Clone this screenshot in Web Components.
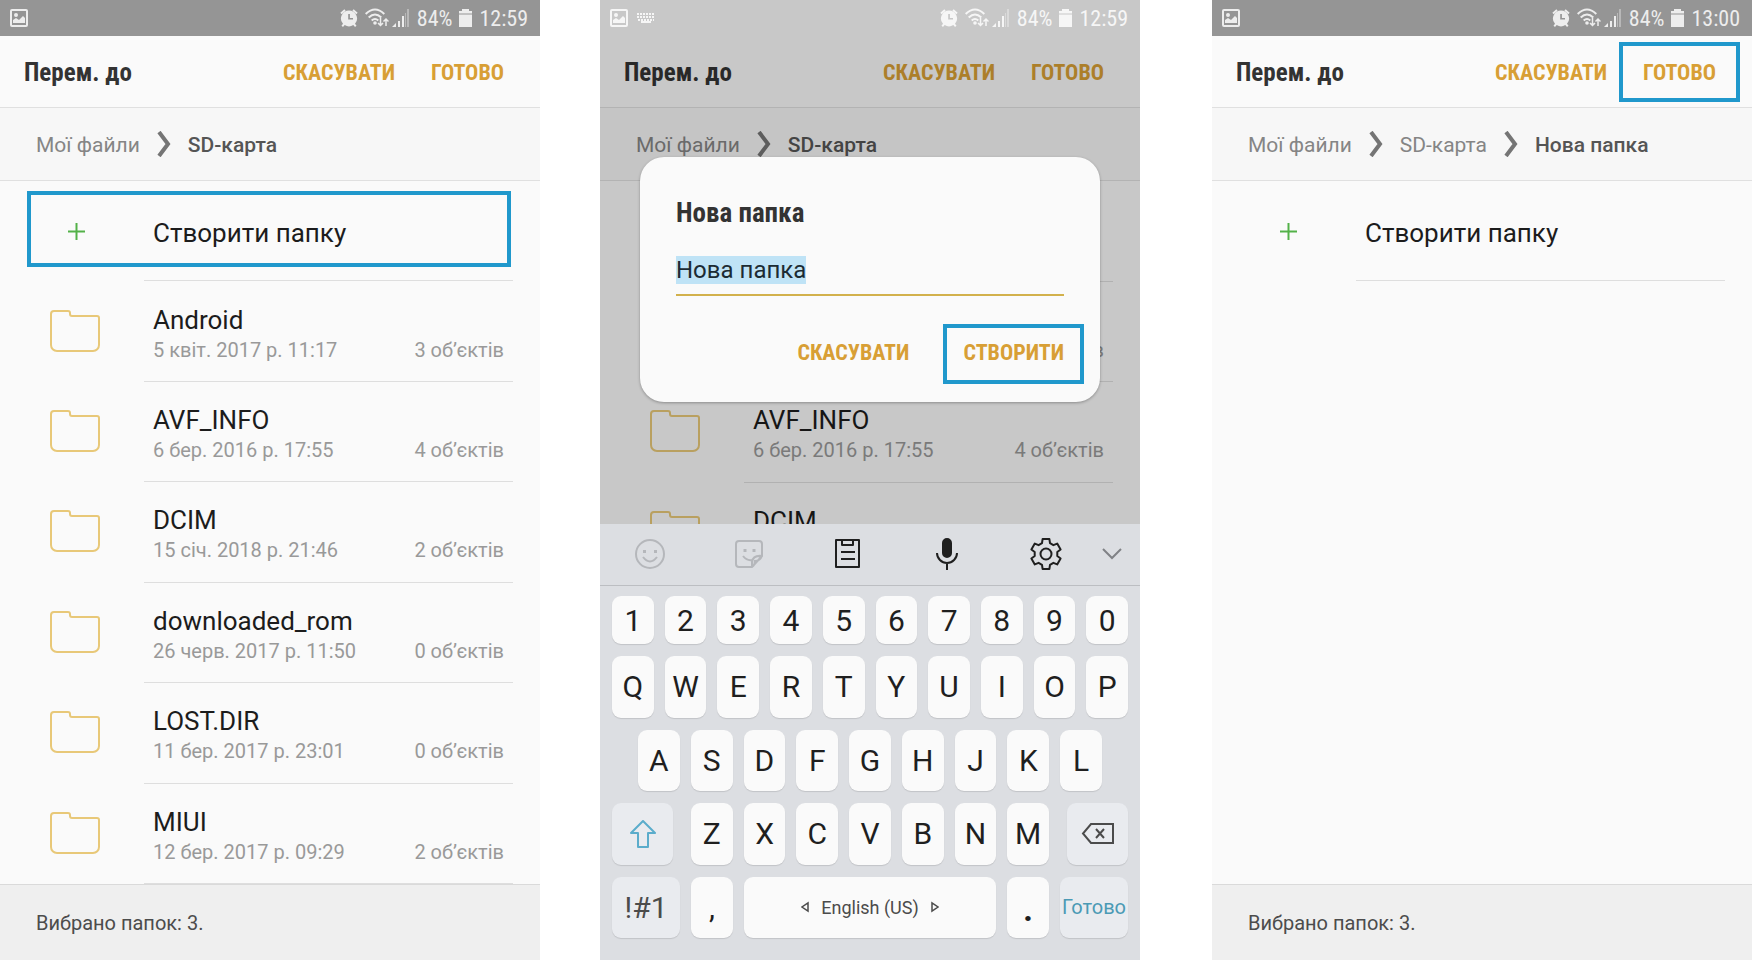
<!DOCTYPE html>
<html lang="uk">
<head>
<meta charset="utf-8">
<title>Нова папка</title>
<style>
    body {
        margin: 0;
        background: #fff;
        font-family: Roboto, "Liberation Sans", sans-serif;
        --condensed: "Roboto Condensed", "Liberation Sans Narrow", Roboto, sans-serif;
        --accent: #d89f35;
        --mark: #2098cc;
    }

    main {
        display: flex;
        min-height: 100vh;
    }

    phone-screen {
        flex: 1;
    }

    phone-screen + phone-screen {
        margin-left: 60px;
    }

    phone-screen:last-child {
        margin-left: 72px;
    }
</style>
</head>
<body>
<main>
    <phone-screen>
        <status-bar slot="status" time="12:59"></status-bar>
        <move-header></move-header>
        <crumb-trail path="Мої файли/SD-карта"></crumb-trail>
        <file-list>
            <create-row marked></create-row>
            <folder-row name="Android" date="5 квіт. 2017 р. 11:17" count="3"></folder-row>
            <folder-row name="AVF_INFO" date="6 бер. 2016 р. 17:55" count="4"></folder-row>
            <folder-row name="DCIM" date="15 січ. 2018 р. 21:46" count="2"></folder-row>
            <folder-row name="downloaded_rom" date="26 черв. 2017 р. 11:50" count="0"></folder-row>
            <folder-row name="LOST.DIR" date="11 бер. 2017 р. 23:01" count="0"></folder-row>
            <folder-row name="MIUI" date="12 бер. 2017 р. 09:29" count="2"></folder-row>
        </file-list>
        <selection-footer>Вибрано папок: 3.</selection-footer>
    </phone-screen>

    <phone-screen dimmed>
        <status-bar slot="status" time="12:59" keyboard></status-bar>
        <move-header></move-header>
        <crumb-trail path="Мої файли/SD-карта"></crumb-trail>
        <file-list>
            <create-row></create-row>
            <folder-row name="Android" date="5 квіт. 2017 р. 11:17" count="3"></folder-row>
            <folder-row name="AVF_INFO" date="6 бер. 2016 р. 17:55" count="4"></folder-row>
            <folder-row name="DCIM" date="15 січ. 2018 р. 21:46" count="2"></folder-row>
        </file-list>
        <name-dialog slot="dialog"></name-dialog>
        <soft-keyboard slot="keyboard"></soft-keyboard>
    </phone-screen>

    <phone-screen>
        <status-bar slot="status" time="13:00"></status-bar>
        <move-header marked></move-header>
        <crumb-trail path="Мої файли/SD-карта/Нова папка"></crumb-trail>
        <file-list>
            <create-row></create-row>
        </file-list>
        <selection-footer>Вибрано папок: 3.</selection-footer>
    </phone-screen>
</main>

<script>
const buttonReset = `
    button {
        margin: 0;
        padding: 0;
        border: 0;
        background: none;
        color: inherit;
        font: inherit;
        cursor: pointer;
    }
    svg { display: block; }
`;

const define = (name, markup, setup) => {
    const template = document.createElement("template");
    template.innerHTML = markup;

    customElements.define(name, class extends HTMLElement {
        connectedCallback() {
            if (this.shadowRoot) {
                return;
            }
            this.attachShadow({mode: "open"});
            this.shadowRoot.appendChild(template.content.cloneNode(true));
            if (setup) {
                setup(this, this.shadowRoot);
            }
        }
    });
};

define("phone-screen", `
    <style>
        :host {
            display: flex;
            flex-direction: column;
            position: relative;
            min-width: 0;
            overflow: hidden;
            background: #fafafa;
        }
        .status {
            position: relative;
            z-index: 2;
            background: #959595;
        }
        :host([dimmed]) .status { background: none; }
        .content {
            display: flex;
            flex-direction: column;
            flex: 1;
        }
        .shade { display: none; }
        :host([dimmed]) .shade {
            display: block;
            position: absolute;
            inset: 0;
            background: rgba(0, 0, 0, 0.2);
        }
        slot[name="dialog"]::slotted(*) {
            position: absolute;
            top: 157px;
            left: 40px;
            right: 40px;
        }
        slot[name="keyboard"]::slotted(*) {
            position: absolute;
            left: 0;
            right: 0;
            bottom: 0;
        }
        :host([dimmed]) .content { padding-bottom: 75px; }
    </style>
    <div class="status"><slot name="status"></slot></div>
    <div class="content"><slot></slot></div>
    <div class="shade"></div>
    <slot name="dialog"></slot>
    <slot name="keyboard"></slot>
`);

define("status-bar", `
    <style>
        :host {
            display: flex;
            align-items: center;
            justify-content: space-between;
            height: 36px;
            padding: 0 12px 0 10px;
            color: #ededed;
            font: 22px/32px var(--condensed);
        }
        :host([keyboard]) { color: #f6f6f6; }
        div { display: flex; align-items: center; }
        .left { gap: 9px; }
        .right { gap: 7px; }
        .keys { display: none; }
        :host([keyboard]) .keys { display: block; }
        svg { display: block; fill: currentColor; }
        span { padding-top: 2px; }
        .signal { margin-left: -4px; }
        .line { fill: none; stroke: currentColor; stroke-width: 2; }
    </style>
    <div class="left">
        <svg width="18" height="18" viewBox="0 0 18 18">
            <rect class="line" x="1" y="1" width="16" height="16" rx="1"/>
            <circle cx="6" cy="6" r="2"/>
            <path d="M3 14v-3l3-2 3 2 4-4 2 2v5z"/>
        </svg>
        <svg class="keys" width="18" height="10" viewBox="0 0 18 10">
            <path d="M0 1h18M0 4h18M1 7h16" fill="none" stroke="currentColor" stroke-width="2" stroke-dasharray="2 1"/>
            <path d="M4 8h10v2H4z"/>
        </svg>
    </div>
    <div class="right">
        <svg width="18" height="20" viewBox="0 0 18 20">
            <path fill-rule="evenodd" d="M9 2.500a8 8 0 0 1 6 13.300l1.500 2-1.500 1.200-1.700-1.900a8 8 0 0 1-8.600 0L3 19l-1.500-1.200 1.500-2A8 8 0 0 1 9 2.500zM8.200 6v5.600h4.800V10H9.900V6z"/>
            <path class="line" d="M1 5.500L5 2M13 2l4 3.500"/>
        </svg>
        <svg width="24" height="20" viewBox="0 0 24 20">
            <path class="line" d="M.700 6q9.300-9 18.600 0M3.700 9.500q6.300-6 12.600 0M6.700 12.500q3.300-3 6.600 0"/>
            <circle cx="10" cy="15" r="1.800"/>
            <path class="line" style="stroke-width: 1.500" d="M15.500 10v7M13 15l2.500 2.500 2.500-2.500M21 18v-7M18.500 13.500L21 11l2.500 2.500"/>
        </svg>
        <svg class="signal" width="18" height="20" viewBox="0 0 18 20">
            <path d="M0 19l4-4v4zM6 13h2v6H6zM10 8h2v11h-2z"/>
            <path opacity=".4" d="M15 1h2v18h-2z"/>
            <path d="M13 5h1v14h-1z" opacity=".4"/>
        </svg>
        <span>84%</span>
        <svg width="13" height="18" viewBox="0 0 13 18">
            <path d="M3 0h7v2H3zM0 2h13v2H0zM0 6h13v12H0z"/>
            <path opacity=".5" d="M0 4h13v2H0z"/>
        </svg>
        <span class="time"></span>
    </div>
`, (host, root) => {
    root.querySelector(".time").textContent = host.getAttribute("time");
});

define("move-header", `
    <style>
        ${buttonReset}
        :host {
            display: flex;
            align-items: center;
            justify-content: space-between;
            height: 71px;
            padding: 0 18px 0 24px;
            border-bottom: 1px solid #e0e0e0;
            font-family: var(--condensed);
            font-weight: 700;
        }
        h1 {
            margin: 0;
            padding-top: 3px;
            color: #333;
            font-size: 25px;
            line-height: 32px;
        }
        div { display: flex; }
        button {
            height: 48px;
            padding: 2px 18px 0;
            color: var(--accent);
            font-size: 22px;
        }
        :host([marked]) .done {
            outline: 4px solid var(--mark);
            outline-offset: 2px;
        }
    </style>
    <h1>Перем. до</h1>
    <div>
        <button type="button">СКАСУВАТИ</button>
        <button type="button" class="done">ГОТОВО</button>
    </div>
`);

define("crumb-trail", `
    <style>
        :host {
            display: block;
            border-bottom: 1px solid #e0e0e0;
            background: #f7f7f7;
        }
        nav {
            display: flex;
            align-items: center;
            gap: 17px;
            height: 72px;
            padding: 0 36px;
            color: #858585;
            font-size: 21px;
        }
        a {
            padding-top: 2px;
            color: inherit;
            text-decoration: none;
        }
        a[aria-current] { color: #555; font-weight: 500; }
        svg { fill: none; stroke: #757575; stroke-width: 4; }
    </style>
    <nav aria-label="Шлях"></nav>
`, (host, root) => {
    const chevron = `<svg width="14" height="26" viewBox="0 0 14 26"><path d="M2 1l9 12-9 12"/></svg>`;
    const parts = host.getAttribute("path").split("/");
    root.querySelector("nav").innerHTML = parts.map((part, i) =>
        `<a href="#"${i === parts.length - 1 ? ' aria-current="page"' : ""}>${part}</a>`
    ).join(chevron);
});

define("file-list", `
    <style>
        :host {
            display: grid;
            grid-template-rows: repeat(7, 1fr);
            flex: 1;
        }
    </style>
    <slot></slot>
`);

const rowStyles = `
    ${buttonReset}
    :host {
        display: flex;
        position: relative;
        min-height: 90px;
    }
    button {
        display: grid;
        grid-template-columns: 144px 1fr;
        flex: 1;
        padding-right: 27px;
        text-align: left;
    }
    .icon {
        align-self: center;
        padding: 0 0 2px 49px;
    }
    .text {
        display: flex;
        flex-direction: column;
        justify-content: center;
        height: 100%;
        box-sizing: border-box;
        padding: 5px 9px 0;
        border-bottom: 1px solid #dedede;
    }
    .name {
        color: #1c1c1c;
        font-size: 26px;
        line-height: 32px;
    }
`;

define("create-row", `
    <style>
        ${rowStyles}
        .icon { padding: 0 0 0 68px; }
        :host([marked])::after {
            content: "";
            position: absolute;
            inset: 10px 29px 14px 27px;
            border: 4px solid var(--mark);
            pointer-events: none;
        }
    </style>
    <button type="button">
        <span class="icon">
            <svg width="17" height="17" viewBox="0 0 17 17"><path d="M8.500 0v17M0 8.500h17" stroke="#53b148" stroke-width="2"/></svg>
        </span>
        <span class="text"><span class="name">Створити папку</span></span>
    </button>
`);

define("folder-row", `
    <style>
        ${rowStyles}
        .meta {
            display: flex;
            justify-content: space-between;
            color: #999;
            font-size: 20px;
            line-height: 28px;
        }
    </style>
    <button type="button">
        <span class="icon">
            <svg width="52" height="44" viewBox="0 0 52 44" fill="none" stroke="#e8c878" stroke-width="2">
                <path d="M2 5a3 3 0 0 1 3-3h14q2 0 2 2v1q0 2 2 2h25q2 0 2 2v27a6 6 0 0 1-6 6H8a6 6 0 0 1-6-6z"/>
            </svg>
        </span>
        <span class="text">
            <span class="name"></span>
            <span class="meta"><span class="date"></span><span class="count"></span></span>
        </span>
    </button>
`, (host, root) => {
    root.querySelector(".name").textContent = host.getAttribute("name");
    root.querySelector(".date").textContent = host.getAttribute("date");
    root.querySelector(".count").textContent = `${host.getAttribute("count")} об’єктів`;
});

define("selection-footer", `
    <style>
        :host {
            display: block;
            padding: 1px 36px 0;
            border-top: 1px solid #dadada;
            background: #efefef;
            color: #4c4c4c;
            font-size: 20px;
            line-height: 74px;
        }
    </style>
    <slot></slot>
`);

define("name-dialog", `
    <style>
        ${buttonReset}
        :host {
            display: block;
            padding: 40px 36px 24px;
            border-radius: 24px;
            background: #fafafa;
            box-shadow: 0 1px 3px rgba(0, 0, 0, 0.3);
        }
        label {
            display: block;
            color: #333;
            font: 700 27px/32px var(--condensed);
        }
        input {
            display: block;
            box-sizing: border-box;
            width: 100%;
            height: 45px;
            margin-top: 22px;
            padding: 0 0 5px;
            border: 0;
            border-bottom: 2px solid #d2b14c;
            border-radius: 0;
            outline: 0;
            background: none;
            color: #1c2b33;
            font: 24px/32px Roboto, sans-serif;
            caret-color: transparent;
        }
        input::selection {
            background: #bfe3f6;
            color: #1c2b33;
        }
        div {
            display: flex;
            justify-content: flex-end;
            gap: 26px;
            margin: 34px -14px 0 0;
        }
        button {
            height: 48px;
            padding: 0 14px 4px;
            color: var(--accent);
            font: 700 22px var(--condensed);
        }
        .create {
            outline: 4px solid var(--mark);
            outline-offset: 2px;
        }
    </style>
    <label for="name">Нова папка</label>
    <input id="name" type="text" value="Нова папка" autocomplete="off" spellcheck="false">
    <div>
        <button type="button">СКАСУВАТИ</button>
        <button type="button" class="create">СТВОРИТИ</button>
    </div>
`, (host, root) => {
    const input = root.querySelector("input");
    input.focus();
    input.select();
});

define("soft-keyboard", `
    <style>
        ${buttonReset}
        :host {
            display: block;
            background: #dcdee2;
            color: #1f1f1f;
        }
        .tools {
            display: grid;
            grid-template-columns: repeat(5, 3fr) 1fr;
            height: 61px;
            padding-right: 12px;
            border-bottom: 1px solid #bcbec2;
        }
        .tools button {
            display: grid;
            place-items: center;
            padding-bottom: 2px;
        }
        .tools svg, .special svg {
            fill: none;
            stroke: currentColor;
            stroke-width: 2;
        }
        .tools .off { color: #b5b7bb; }
        .tools .fold { color: #808286; }
        .keys {
            display: grid;
            grid-template-rows: 48px repeat(4, 1fr);
            gap: 12px;
            box-sizing: border-box;
            height: 374px;
            padding: 10px 12px 22px;
        }
        .row { display: flex; gap: 11px; }
        .row.home { padding: 0 26px; }
        .row.wide { gap: 18px; }
        .letters { display: flex; flex: 1; gap: 11px; }
        .row button {
            display: grid;
            place-items: center;
            flex: 1 1 0;
            min-width: 0;
            border-radius: 9px;
            background: #fafafa;
            box-shadow: 0 1px 1px rgba(0, 0, 0, 0.12);
            font-size: 30px;
        }
        .row .special { background: #e9ebef; }
        .row .side { flex: 0 0 61px; }
        .row .end { flex: 0 0 68px; }
        .row .dot { flex: 0 0 42px; }
        .row .period { padding-top: 6px; font-weight: 900; }
        .row .shift { color: #5baccb; }
        .row .erase { color: #4b4b4b; }
        .row .symbols { color: #4b4b4b; }
        .row .done { color: #4b9ab5; font-size: 20px; }
        .row .space {
            display: flex;
            align-items: center;
            justify-content: center;
            gap: 12px;
            color: #4b4b4b;
            font-size: 18px;
        }
        .space svg { fill: none; stroke: currentColor; stroke-width: 1.500; }
    </style>
    <div class="tools">
        <button type="button" class="off" aria-label="Емодзі">
            <svg width="32" height="32" viewBox="0 0 32 32">
                <circle cx="16" cy="16" r="14"/>
                <path d="M9 19q7 9 14 0"/>
                <path d="M10.500 12v3M21.500 12v3" stroke-width="3"/>
            </svg>
        </button>
        <button type="button" class="off" aria-label="Наліпки">
            <svg width="28" height="28" viewBox="0 0 28 28">
                <path d="M4 1h20q3 0 3 3v12L17 27H4q-3 0-3-3V4q0-3 3-3zM17 27q3-2 3-6 5 0 7-5-9-1-10 6zM8 16q4 5 9 4"/>
                <path d="M10 9v3M19 9v3" stroke-width="3"/>
            </svg>
        </button>
        <button type="button" aria-label="Буфер обміну">
            <svg width="26" height="30" viewBox="0 0 26 30">
                <path stroke-linejoin="round" d="M1 1h23v27H1zM7 1v5h11V1M6 13h14M6 20h14"/>
            </svg>
        </button>
        <button type="button" aria-label="Голосове введення">
            <svg width="24" height="32" viewBox="0 0 24 32">
                <rect x="8" y="1" width="8" height="18" rx="4" fill="currentColor"/>
                <path d="M2 15a10 10 0 0 0 20 0M12 25v7"/>
            </svg>
        </button>
        <button type="button" aria-label="Налаштування">
            <svg width="32" height="32" viewBox="0 0 32 32">
                <path stroke-linejoin="round" d="M12.600 1.100h6.800l.6 4.100 3.400 2 3.800-1.600 3.400 5.900-3.300 2.500v4l3.300 2.500-3.400 5.900-3.800-1.600-3.400 2-.6 4.100h-6.800l-.6-4.100-3.400-2-3.800 1.600-3.400-5.900L4.700 18v-4l-3.300-2.500 3.400-5.900 3.800 1.600 3.400-2z"/>
                <circle cx="16" cy="16" r="5.500"/>
            </svg>
        </button>
        <button type="button" class="fold" aria-label="Згорнути">
            <svg width="20" height="12" viewBox="0 0 20 12"><path d="M1 1l9 9 9-9"/></svg>
        </button>
    </div>
    <div class="keys">
        <div class="row" data-keys="1234567890"></div>
        <div class="row" data-keys="QWERTYUIOP"></div>
        <div class="row home" data-keys="ASDFGHJKL"></div>
        <div class="row wide">
            <button type="button" class="special side shift" aria-label="Shift">
                <svg width="28" height="28" viewBox="0 0 28 28"><path stroke-linejoin="round" d="M14 1l12 12h-7v14H9V13H2z"/></svg>
            </button>
            <div class="letters" data-keys="ZXCVBNM"></div>
            <button type="button" class="special side erase" aria-label="Стерти">
                <svg width="34" height="22" viewBox="0 0 34 22"><path d="M10 1h22v19H10l-8-9.500zM15 6l8 9M23 6l-8 9"/></svg>
            </button>
        </div>
        <div class="row">
            <button type="button" class="special end symbols">!#1</button>
            <button type="button" class="dot">,</button>
            <button type="button" class="space">
                <svg width="8" height="12" viewBox="0 0 8 12"><path d="M7 2v8L1 6z"/></svg>
                English (US)
                <svg width="8" height="12" viewBox="0 0 8 12"><path d="M1 2v8l6-4z"/></svg>
            </button>
            <button type="button" class="dot period">.</button>
            <button type="button" class="special end done">Готово</button>
        </div>
    </div>
`, (host, root) => {
    root.querySelectorAll("[data-keys]").forEach(row => {
        row.innerHTML = [...row.dataset.keys].map(key => `<button type="button">${key}</button>`).join("");
    });
});
</script>
</body>
</html>
